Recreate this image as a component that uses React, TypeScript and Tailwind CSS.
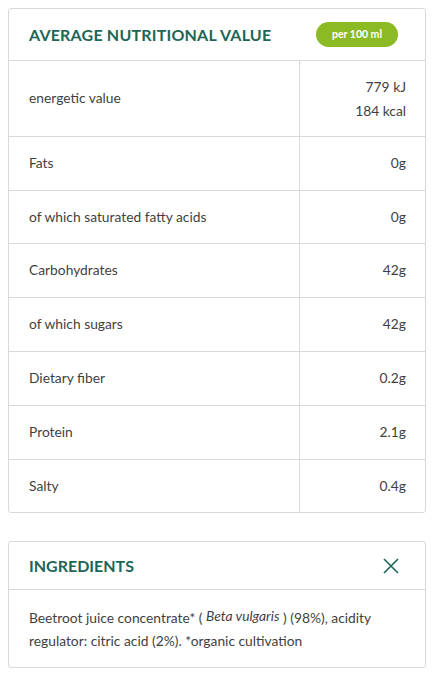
const rows = [
  { label: "Fats", value: "0g", h: "h-[54px]" },
  { label: "of which saturated fatty acids", value: "0g", h: "h-[53px]" },
  { label: "Carbohydrates", value: "42g", h: "h-[54px]" },
  { label: "of which sugars", value: "42g", h: "h-[54px]" },
  { label: "Dietary fiber", value: "0.2g", h: "h-[54px]" },
  { label: "Protein", value: "2.1g", h: "h-[54px]" },
  { label: "Salty", value: "0.4g", h: "h-[52px]" },
];

const App = () => {
  return (
    <div
      className="min-h-screen bg-white p-[8px] pr-[16px] text-[#3f3f3f]"
      style={{ fontFamily: "Lato, 'Liberation Sans', sans-serif" }}
    >
      <div className="border border-[#d9d9d9] rounded-[3px]">
        <div className="flex items-center justify-between h-[52px] pl-[20px] pr-[27px] border-b border-[#d9d9d9]">
          <h2 className="text-[16px] font-bold text-[#1d6656] tracking-[0.2px]">AVERAGE NUTRITIONAL VALUE</h2>
          <span className="flex items-center justify-center w-[82px] h-[25px] rounded-full bg-[#8cba24] text-white text-[10.5px] font-bold">
            per 100 ml
          </span>
        </div>

        <div className="grid grid-cols-[290px_1fr] text-[13.8px]">
          <div className="flex items-center h-[76px] pl-[20px] border-b border-[#d9d9d9]">energetic value</div>
          <div className="flex flex-col items-end justify-center h-[76px] pr-[19px] leading-[24px] border-b border-l border-[#d9d9d9]">
            <span>779 kJ</span>
            <span>184 kcal</span>
          </div>
          {rows.map((r, i) => {
            const last = i === rows.length - 1;
            return (
              <div key={r.label} className="contents">
                <div className={`flex items-center pl-[20px] ${r.h} ${last ? "" : "border-b border-[#d9d9d9]"}`}>
                  {r.label}
                </div>
                <div className={`flex items-center justify-end pr-[19px] border-l border-[#d9d9d9] ${r.h} ${last ? "" : "border-b"}`}>
                  {r.value}
                </div>
              </div>
            );
          })}
        </div>
      </div>

      <div className="mt-[28px] border border-[#d9d9d9] rounded-[3px]">
        <div className="flex items-center justify-between h-[48px] pl-[20px] pr-[26px] border-b border-[#d9d9d9]">
          <h2 className="text-[16px] font-bold text-[#1d6656]">INGREDIENTS</h2>
          <svg width="16" height="16" viewBox="0 0 16 16" fill="none" stroke="#1d6656" strokeWidth="1.6">
            <path d="M1 1L15 15M15 1L1 15" />
          </svg>
        </div>
        <p className="px-[20px] pt-[14px] pb-[15px] text-[13.8px] leading-[23px]">
          Beetroot juice concentrate* ( <i className="align-[2px]">Beta vulgaris</i> ) (98%), acidity regulator: citric acid (2%). *organic cultivation
        </p>
      </div>
    </div>
  );
};

export default App;
